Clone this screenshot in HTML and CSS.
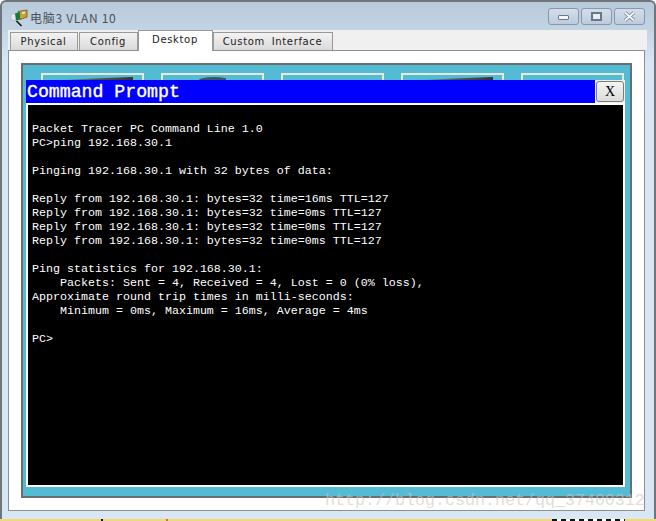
FILE: index.html
```html
<!DOCTYPE html>
<html lang="zh">
<head>
<meta charset="utf-8">
<title>电脑3 VLAN 10</title>
<link rel="stylesheet" href="styles.css">
</head>
<body>
<div class="window">
  <header class="titlebar">
    <svg class="app-icon" width="18" height="18" viewBox="0 0 18 18">
      <circle cx="4" cy="8" r="3.500" fill="#e4e9ec" stroke="#b4bcc2"/>
      <path d="M6.500 12l5 5" stroke="#1c1c1c" stroke-width="1.700"/>
      <path d="M8 2.500l9-1.500v7l-7 2.500z" fill="#c9a03c" stroke="#6a5520" stroke-width=".8"/>
      <path d="M12 3l3-.5v2l-3 .5z" fill="#f1e2a8"/>
      <path d="M5 4.500l5-1.500v7.500l-4 1z" fill="#177a33"/>
    </svg>
    <span class="title-text">电脑3 VLAN 10</span>
    <div class="win-buttons">
      <div class="win-btn"><span class="glyph-min"></span></div>
      <div class="win-btn"><span class="glyph-max"></span></div>
      <div class="win-btn">
        <svg width="13" height="11" viewBox="0 0 13 11"><path d="M2 1.500l9 8M11 1.500l-9 8" stroke="#7a8798" stroke-width="3.600"/><path d="M2 1.500l9 8M11 1.500l-9 8" stroke="#f4f6f8" stroke-width="1.800"/></svg>
      </div>
    </div>
  </header>
  <div class="tabstrip">
    <div class="tab">Physical</div>
    <div class="tab">Config</div>
    <div class="tab active">Desktop</div>
    <div class="tab">Custom Interface</div>
  </div>
  <main class="panel">
    <div class="desktop">
      <div class="tiles">
        <div class="tile"><span class="tile-art"></span></div>
        <div class="tile"><span class="tile-art arc"></span></div>
        <div class="tile"></div>
        <div class="tile"><span class="tile-art"></span></div>
        <div class="tile"></div>
      </div>
      <section class="prompt">
        <div class="prompt-head">
          <div class="prompt-title">Command Prompt</div>
          <div class="prompt-close"><span>X</span></div>
        </div>
        <pre class="terminal">
Packet Tracer PC Command Line 1.0
PC&gt;ping 192.168.30.1

Pinging 192.168.30.1 with 32 bytes of data:

Reply from 192.168.30.1: bytes=32 time=16ms TTL=127
Reply from 192.168.30.1: bytes=32 time=0ms TTL=127
Reply from 192.168.30.1: bytes=32 time=0ms TTL=127
Reply from 192.168.30.1: bytes=32 time=0ms TTL=127

Ping statistics for 192.168.30.1:
    Packets: Sent = 4, Received = 4, Lost = 0 (0% loss),
Approximate round trip times in milli-seconds:
    Minimum = 0ms, Maximum = 16ms, Average = 4ms

PC&gt;</pre>
      </section>
    </div>
  </main>
</div>
<div class="taskstrip"></div>
<div class="watermark">http://blog.csdn.net/qq_37400312</div>
</body>
</html>
```
FILE: styles.css
```css
* { box-sizing: border-box; }
html, body { margin: 0; padding: 0; }
body { width: 656px; height: 521px; overflow: hidden; background: #fff; position: relative; font-family: "Liberation Sans", sans-serif; }

.window {
  height: 519px;
  padding: 0 7px 8px 6px;
  display: flex;
  flex-direction: column;
  border: 2px solid #70757b;
  border-bottom: 0;
  border-radius: 6px 6px 0 0;
  background: linear-gradient(to bottom, #b8cada 0, #c4d5e5 30px, #d9e6f3 60px, #d9e6f3 100%);
}

.titlebar { height: 28px; display: flex; align-items: center; padding: 3px 0 0 2px; }
.app-icon { flex: none; }
.title-text { margin-left: 2px; font-family: "Noto Sans CJK SC", "Liberation Sans", sans-serif; font-size: 12px; letter-spacing: .7px; color: #4a5158; }
.win-buttons { margin-left: auto; margin-right: 2px; margin-top: -3px; display: flex; gap: 2px; }
.win-btn {
  width: 31px; height: 17px;
  border: 1px solid #8a97ab;
  border-radius: 3px;
  display: flex; align-items: center; justify-content: center;
  background: linear-gradient(to bottom, #d3deea, #bccbdc);
}
.glyph-min { width: 11px; height: 5px; margin-top: 3px; border: 1px solid #6c7888; background: #f3f5f8; border-radius: 1px; }
.glyph-max { width: 11px; height: 9px; border: 2px solid #68768a; background: #e8edf3; }

.tabstrip { height: 20px; display: flex; gap: 1px; padding: 0 0 0 2px; background: #f0f0f0; align-items: flex-end; position: relative; z-index: 1; }
.tab {
  height: 18px;
  padding: 3px 1px 0 0;
  border: 1px solid #999;
  border-bottom: 0;
  background: linear-gradient(to bottom, #f3f3f3, #dadada);
  font-family: "DejaVu Sans", sans-serif;
  font-size: 10px;
  letter-spacing: .65px;
  word-spacing: 3px;
  color: #222;
  text-align: center;
}
.tab:nth-child(1) { width: 68px; }
.tab:nth-child(2) { width: 59px; }
.tab:nth-child(3) { width: 75px; height: 21px; margin-bottom: -1px; background: #fff; padding-top: 3px; margin-left: -1px; }
.tab:nth-child(4) { width: 120px; margin-left: -1px; }

.panel { flex: 1; margin-right: 2px; padding: 12px; background: #fff; border: 1px solid #8e8f92; }
.desktop { height: 100%; position: relative; padding: 8px 0 0 18px; background: #53bcd4; border: 2px solid #6d6d6d; overflow: hidden; }
.tiles { display: flex; gap: 17px; }
.tile { flex: none; width: 103px; height: 40px; border: 2px solid #e8e8d8; position: relative; }
.tile-art { display: block; position: absolute; left: 13px; top: 2px; width: 77px; height: 3px; background: linear-gradient(to right, rgba(60,60,60,0) 0, #555 50%, #333 100%); clip-path: polygon(0 100%, 100% 0, 100% 100%); }
.tile-art.arc { left: 33px; top: 2px; width: 30px; background: #3a5560; clip-path: ellipse(50% 100% at 60% 100%); }

.prompt { position: absolute; left: 3px; top: 15px; width: 599px; bottom: 9px; display: flex; flex-direction: column; }
.prompt-head { height: 23px; display: flex; flex: none; background: #f1efe2; }
.prompt-title { flex: 1; padding-left: 1px; background: #0000ff; color: #fff; font-family: "Liberation Mono", monospace; -webkit-text-stroke: .4px #fff; font-size: 18.2px; line-height: 25px; }
.prompt-close { width: 30px; padding: 1px; }
.prompt-close span {
  display: block; height: 21px;
  border: 1px solid #7d7d7d; border-radius: 3px;
  background: linear-gradient(to bottom, #f4f4f4, #dcdcdc);
  font-family: "Liberation Serif", serif; font-size: 14px; line-height: 20px; text-align: center; color: #000;
}
.terminal {
  flex: 1; margin: 0;
  width: 599px;
  border: 2px solid #fff;
  background: #000;
  color: #fff;
  font-family: "Liberation Mono", monospace;
  font-size: 11.67px;
  line-height: 14px;
  padding: 17px 0 0 4px;
  overflow: hidden;
}

.taskstrip { height: 2px; background-color: #f3d873; background-image: linear-gradient(to right, #111, #111), linear-gradient(to right, #c9772e, #c9772e), repeating-linear-gradient(to right, #111 0 5px, #fff 5px 9px); background-size: 2px 2px, 2px 2px, 73px 2px; background-position: 101px 0, 166px 0, 552px 0; background-repeat: no-repeat; }
.watermark { position: absolute; left: 325px; top: 491px; font-family: "Liberation Mono", monospace; font-size: 16.67px; line-height: 20px; color: rgba(200, 200, 195, .6); white-space: nowrap; }
```
